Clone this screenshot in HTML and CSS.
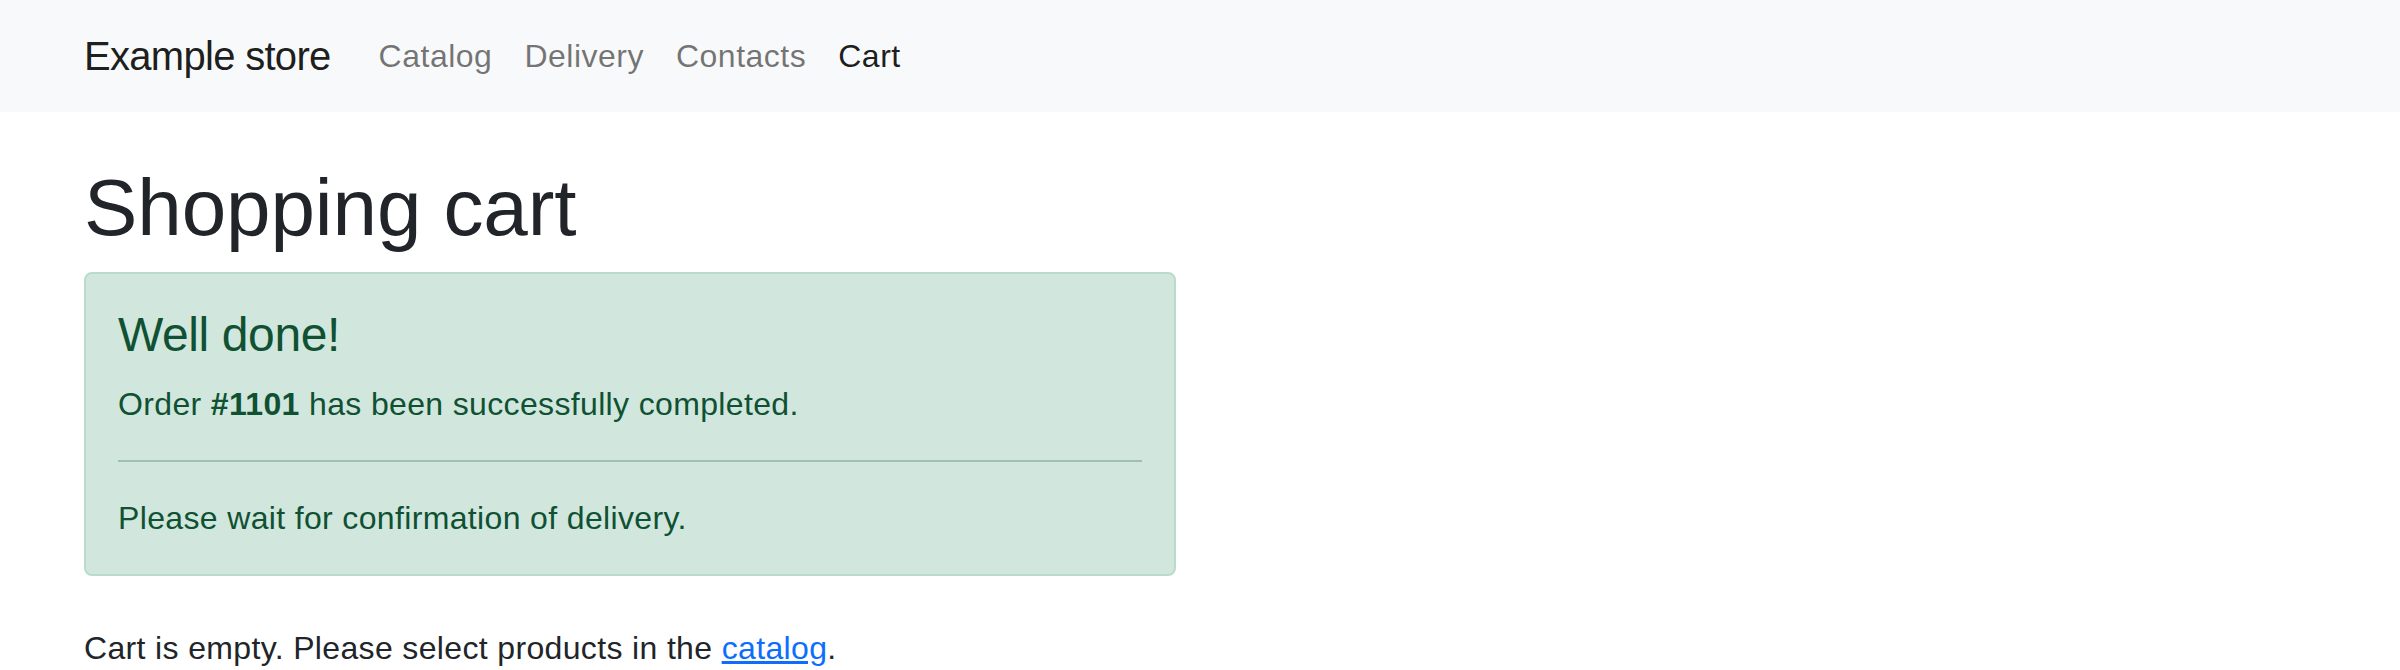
FILE: index.html
```html
<!DOCTYPE html>
<html lang="en">
<head>
<meta charset="utf-8">
<title>Shopping cart</title>
<link rel="stylesheet" href="styles.css">
</head>
<body>
<nav class="navbar">
  <div class="container nav-inner">
    <a class="brand" href="#">Example store</a>
    <ul class="nav-links">
      <li><a class="nav-link" href="#">Catalog</a></li>
      <li><a class="nav-link" href="#">Delivery</a></li>
      <li><a class="nav-link" href="#">Contacts</a></li>
      <li><a class="nav-link active" href="#">Cart</a></li>
    </ul>
  </div>
</nav>
<main class="container main">
  <h1 class="title">Shopping cart</h1>
  <div class="row">
    <div class="col-half">
      <div class="alert">
        <h4 class="alert-heading">Well done!</h4>
        <p class="alert-text">Order <b>#1101</b> has been successfully completed.</p>
        <hr class="alert-rule">
        <p class="alert-text last">Please wait for confirmation of delivery.</p>
      </div>
    </div>
  </div>
  <p class="empty">Cart is empty. Please select products in the <a class="link" href="#">catalog</a>.</p>
</main>
</body>
</html>
```
FILE: styles.css
```css
* { box-sizing: border-box; }
html, body { margin: 0; padding: 0; }
body {
  font-family: "Liberation Sans", Arial, sans-serif;
  font-size: 32px;
  line-height: 1.5;
  letter-spacing: 0.35px;
  color: #212529;
  background: #fff;
}
.container {
  width: 2280px;
  margin: 0 auto;
  padding: 0 24px;
}
.navbar {
  background: #f8f9fa;
  padding: 16px 0;
}
.nav-inner {
  display: flex;
  align-items: center;
}
.brand {
  font-size: 40px;
  line-height: 1.5;
  letter-spacing: -0.7px;
  padding: 10px 0;
  margin-right: 32px;
  color: rgba(0,0,0,.9);
  text-decoration: none;
}
.nav-links {
  display: flex;
  list-style: none;
  margin: 0;
  padding: 0;
}
.nav-link {
  display: block;
  padding: 16px;
  letter-spacing: 0.5px;
  color: rgba(0,0,0,.55);
  text-decoration: none;
}
.nav-link.active { color: rgba(0,0,0,.9); }
.main { padding-top: 48px; }
.title {
  font-size: 80px;
  font-weight: 500;
  line-height: 1.2;
  letter-spacing: -0.1px;
  margin: 0 0 16px;
}
.row { display: flex; }
.col-half { width: 1092px; }
.alert {
  background: #d1e7dd;
  border: 2px solid #badbcc;
  border-radius: 8px;
  color: #0f5132;
  padding: 32px;
  margin-bottom: 48px;
}
.alert-heading {
  font-size: 48px;
  font-weight: 500;
  line-height: 1.2;
  letter-spacing: -0.4px;
  margin: 0 0 16px;
}
.alert-text { margin: 0 0 32px; }
.alert-text b { font-weight: 700; }
.alert-text.last { margin-bottom: 0; }
.alert-rule {
  border: 0;
  border-top: 2px solid #0f5132;
  opacity: .25;
  margin: 32px 0;
}
.empty { margin: 0; }
.link { color: #0d6efd; text-decoration: underline; }
```
